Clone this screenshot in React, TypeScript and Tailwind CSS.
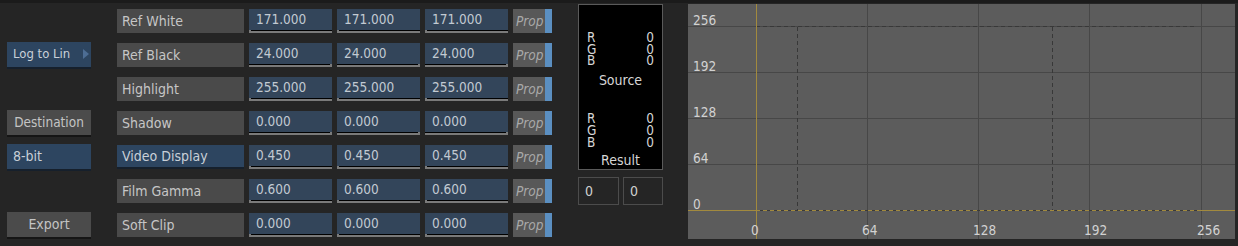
import React from 'react';

const FONT = { fontFamily: '"DejaVu Sans Condensed", "DejaVu Sans", sans-serif' };

type Row = {
  label: string;
  active?: boolean;
  values: string[];
  tick: 'left' | 'right';
};

const ROWS: Row[] = [
  { label: 'Ref White', values: ['171.000', '171.000', '171.000'], tick: 'left' },
  { label: 'Ref Black', values: ['24.000', '24.000', '24.000'], tick: 'right' },
  { label: 'Highlight', values: ['255.000', '255.000', '255.000'], tick: 'left' },
  { label: 'Shadow', values: ['0.000', '0.000', '0.000'], tick: 'right' },
  { label: 'Video Display', active: true, values: ['0.450', '0.450', '0.450'], tick: 'left' },
  { label: 'Film Gamma', values: ['0.600', '0.600', '0.600'], tick: 'left' },
  { label: 'Soft Clip', values: ['0.000', '0.000', '0.000'], tick: 'left' },
];

const LeftButton = ({ index }: { index: number }) => {
  if (index === 1)
    return (
      <div className="w-[84px] h-[27px] bg-[#2d4560] border-b-2 border-[#16202c] flex items-center justify-between pl-[6px] pr-[2px] text-[13px] text-[#c9d0d8]">
        <span>Log to Lin</span>
        <span className="w-0 h-0 border-y-[5px] border-y-transparent border-l-[6px] border-l-[#4d6d94]" />
      </div>
    );
  if (index === 3)
    return (
      <div className="w-[84px] h-[27px] bg-[#4b4b4b] border-b-2 border-[#151515] flex items-center justify-center text-[13.5px] text-[#c4c4c4]">
        Destination
      </div>
    );
  if (index === 4)
    return (
      <div className="w-[84px] h-[27px] bg-[#2d4560] border-b-2 border-[#16202c] flex items-center pl-[6px] text-[14px] text-[#c9d0d8]">
        8-bit
      </div>
    );
  if (index === 6)
    return (
      <div className="w-[84px] h-[27px] bg-[#4b4b4b] border-b-2 border-[#151515] flex items-center justify-center text-[14px] text-[#c4c4c4]">
        Export
      </div>
    );
  return <div className="w-[84px]" />;
};

const Field = ({ value, tick }: { value: string; tick: 'left' | 'right' }) => (
  <div className="w-[83px] h-[24px] bg-[#33455a] flex flex-col">
    <div className="flex-1 pl-[7px] text-[13.5px] leading-[21px] text-[#c2cad2]">{value}</div>
    <div
      className={
        tick === 'left'
          ? 'h-[5px] bg-black border-b-2 border-l-2 border-[#7a7a7a]'
          : 'h-[5px] bg-black border-b-2 border-r-2 border-[#7a7a7a]'
      }
    />
  </div>
);

const Prop = () => (
  <div className="w-[39px] h-[24px] bg-[#585858] flex">
    <div className="flex-1 pl-[3px] text-[13.5px] leading-[24px] italic text-[#a9a9a9]">Prop</div>
    <div className="w-[7px] bg-[#5b8fc1]" />
  </div>
);

const RGB = () => (
  <div className="flex justify-between px-[8px] text-[13.5px] leading-[11.7px] text-[#d6d6d6]">
    <div className="flex flex-col">
      <span>R</span>
      <span>G</span>
      <span>B</span>
    </div>
    <div className="flex flex-col items-end">
      <span>0</span>
      <span>0</span>
      <span>0</span>
    </div>
  </div>
);

const Graph = () => {
  const xs = [68, 179, 290, 401, 513];
  const ys = [22, 68, 114, 160, 206];
  const xl = ['0', '64', '128', '192', '256'];
  const yl = ['256', '192', '128', '64', '0'];
  const xlx = [63, 174, 285, 396, 509];
  return (
    <svg width="547" height="235" className="block">
      <rect width="547" height="235" fill="#5c5c5c" />
      {xs.slice(1).map((x) => (
        <line key={'v' + x} x1={x + 0.5} y1={0} x2={x + 0.5} y2={235} stroke="#474747" strokeWidth="1" />
      ))}
      {ys.slice(0, 4).map((y) => (
        <line key={'h' + y} x1={0} y1={y + 0.5} x2={547} y2={y + 0.5} stroke="#474747" strokeWidth="1" />
      ))}
      <line x1={68} y1={22.5} x2={509} y2={22.5} stroke="#383838" strokeWidth="1" strokeDasharray="4 3" />
      <line x1={109.5} y1={23} x2={109.5} y2={206} stroke="#383838" strokeWidth="1" strokeDasharray="4 3" />
      <line x1={364.5} y1={23} x2={364.5} y2={206} stroke="#383838" strokeWidth="1" strokeDasharray="4 3" />
      <line x1={0} y1={206.5} x2={68} y2={206.5} stroke="#a28a3e" strokeWidth="1" />
      <line x1={68} y1={206.5} x2={509} y2={206.5} stroke="#3a3a3a" strokeWidth="1" />
      <line x1={68} y1={206.5} x2={509} y2={206.5} stroke="#a28a3e" strokeWidth="1" strokeDasharray="4 3" />
      <line x1={509} y1={206.5} x2={547} y2={206.5} stroke="#a28a3e" strokeWidth="1" />
      <line x1={68.5} y1={0} x2={68.5} y2={235} stroke="#a28a3e" strokeWidth="1" />
      {yl.map((t, i) => (
        <text key={'yl' + t} x={5} y={ys[i] - 1} fontSize="13.5" fill="#d2d2d2" style={FONT}>
          {t}
        </text>
      ))}
      {xl.map((t, i) => (
        <text key={'xl' + t} x={xlx[i]} y={231} fontSize="13.5" fill="#d2d2d2" style={FONT}>
          {t}
        </text>
      ))}
    </svg>
  );
};

export default function App() {
  return (
    <div className="w-[1238px] h-[246px] bg-[#252525] border-t-[3px] border-[#1b1b1b] flex overflow-hidden" style={FONT}>
      <div className="pt-[6px] flex flex-col gap-[10px]">
        {ROWS.map((r, i) => (
          <div key={r.label} className="flex items-center h-[24px]">
            <div className="ml-[7px]">
              <LeftButton index={i} />
            </div>
            <div
              className={
                r.active
                  ? 'ml-[26px] w-[127px] h-[24px] bg-[#2d4560] border-b-2 border-[#16202c] pl-[5px] text-[14px] leading-[23px] text-[#c9d0d8]'
                  : 'ml-[26px] w-[127px] h-[24px] bg-[#4a4a4a] pl-[5px] text-[14px] leading-[24px] text-[#c6c6c6]'
              }
            >
              {r.label}
            </div>
            <div className="ml-[5px] flex gap-[5px]">
              {r.values.map((v, j) => (
                <Field key={j} value={v} tick={r.tick} />
              ))}
              <Prop />
            </div>
          </div>
        ))}
      </div>

      <div className="ml-[26px] pt-[1px] flex flex-col">
        <div className="w-[85px] h-[166px] bg-black border border-[#5a5a5a] flex flex-col pt-[27px]">
          <RGB />
          <div className="text-center text-[14px] leading-[18px] mt-[4px] text-[#d6d6d6]">Source</div>
          <div className="mt-[24px]">
            <RGB />
          </div>
          <div className="text-center text-[14px] leading-[18px] mt-[3px] text-[#d6d6d6]">Result</div>
        </div>
        <div className="mt-[7px] flex gap-[4px]">
          <div className="w-[41px] h-[28px] border border-[#4c4c4c] pl-[6px] text-[14px] leading-[26px] text-[#cfcfcf]">0</div>
          <div className="w-[40px] h-[28px] border border-[#4c4c4c] pl-[6px] text-[14px] leading-[26px] text-[#cfcfcf]">0</div>
        </div>
      </div>

      <div className="ml-[25px] mt-[1px]">
        <Graph />
      </div>
    </div>
  );
}
